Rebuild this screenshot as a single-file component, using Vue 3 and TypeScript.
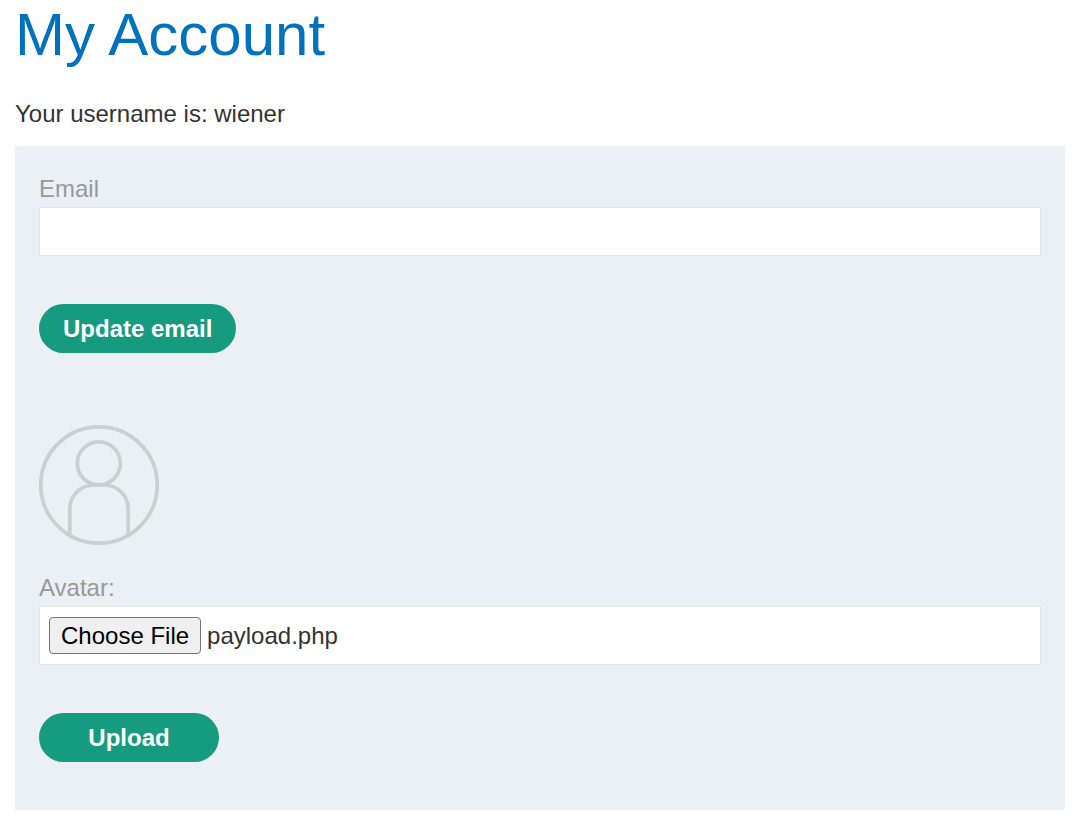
<script setup lang="ts">
import { ref } from 'vue'

const email = ref<string>('')
const fileName = ref<string>('payload.php')

function onFileChange(event: Event): void {
  const input = event.target as HTMLInputElement
  fileName.value = input.files?.[0]?.name ?? 'No file chosen'
}
</script>

<template>
  <main class="account">
    <h1 class="title">My Account</h1>
    <p class="username">Your username is: wiener</p>

    <div class="panel">
      <form class="form" @submit.prevent>
        <label class="label" for="email">Email</label>
        <input id="email" v-model="email" class="field" type="email" name="email" />
        <button class="button" type="submit">Update email</button>
      </form>

      <form class="form" @submit.prevent>
        <svg class="avatar" viewBox="0 0 120 120" aria-hidden="true">
          <circle cx="60" cy="60" r="58.2" />
          <circle cx="59.8" cy="38.4" r="21.5" />
          <path d="M30.8 109V84A24 24 0 0 1 54.8 60H65.2A24 24 0 0 1 89.2 84V109" />
        </svg>
        <label class="label" for="avatar">Avatar:</label>
        <div class="field file">
          <span class="choose">Choose File</span>
          <span class="file-name">{{ fileName }}</span>
          <input id="avatar" class="file-input" type="file" name="avatar" @change="onFileChange" />
        </div>
        <button class="button" type="submit">Upload</button>
      </form>
    </div>
  </main>
</template>

<style>
body {
  background: #fff;
}
</style>

<style scoped>
.account {
  padding: 0 9px 15px 15px;
  color: #333332;
  font-family: Arial, "Liberation Sans", sans-serif;
  font-size: 24px;
  line-height: 32px;
}

.title {
  margin: 0 0 28px;
  color: #0071bc;
  font-size: 60px;
  font-weight: 400;
  line-height: 70px;
}

.username {
  margin: 0 0 16px;
}

.panel {
  display: flex;
  flex-direction: column;
  gap: 72px;
  padding: 24px 24px 48px;
  background: #eaf0f3;
}

.form {
  display: flex;
  flex-direction: column;
  align-items: flex-start;
}

.label {
  color: #999;
  line-height: 37px;
}

.field {
  box-sizing: border-box;
  width: 100%;
  margin: 0 0 48px;
  padding: 8px;
  border: 1px solid #e4e6e6;
  border-radius: 0;
  background: #fff;
  color: inherit;
  font: inherit;
  line-height: 31px;
}

.file {
  position: relative;
  display: flex;
  align-items: center;
  gap: 6px;
  padding: 10px 9px;
}

.choose {
  padding: 0 11px;
  border: 1px solid #767676;
  border-radius: 4px;
  background: #efefef;
  color: #000;
  line-height: 35px;
}

.file-input {
  position: absolute;
  inset: 0;
  width: 100%;
  opacity: 0;
  cursor: pointer;
}

.button {
  min-width: 180px;
  padding: 0 24px;
  border: 0;
  border-radius: 25px;
  background: #169b80;
  color: #fff;
  font: inherit;
  font-weight: 700;
  line-height: 49px;
  cursor: pointer;
}

.avatar {
  width: 120px;
  height: 120px;
  margin-bottom: 24px;
  fill: none;
  stroke: #cad0d0;
  stroke-width: 3.7;
}
</style>
